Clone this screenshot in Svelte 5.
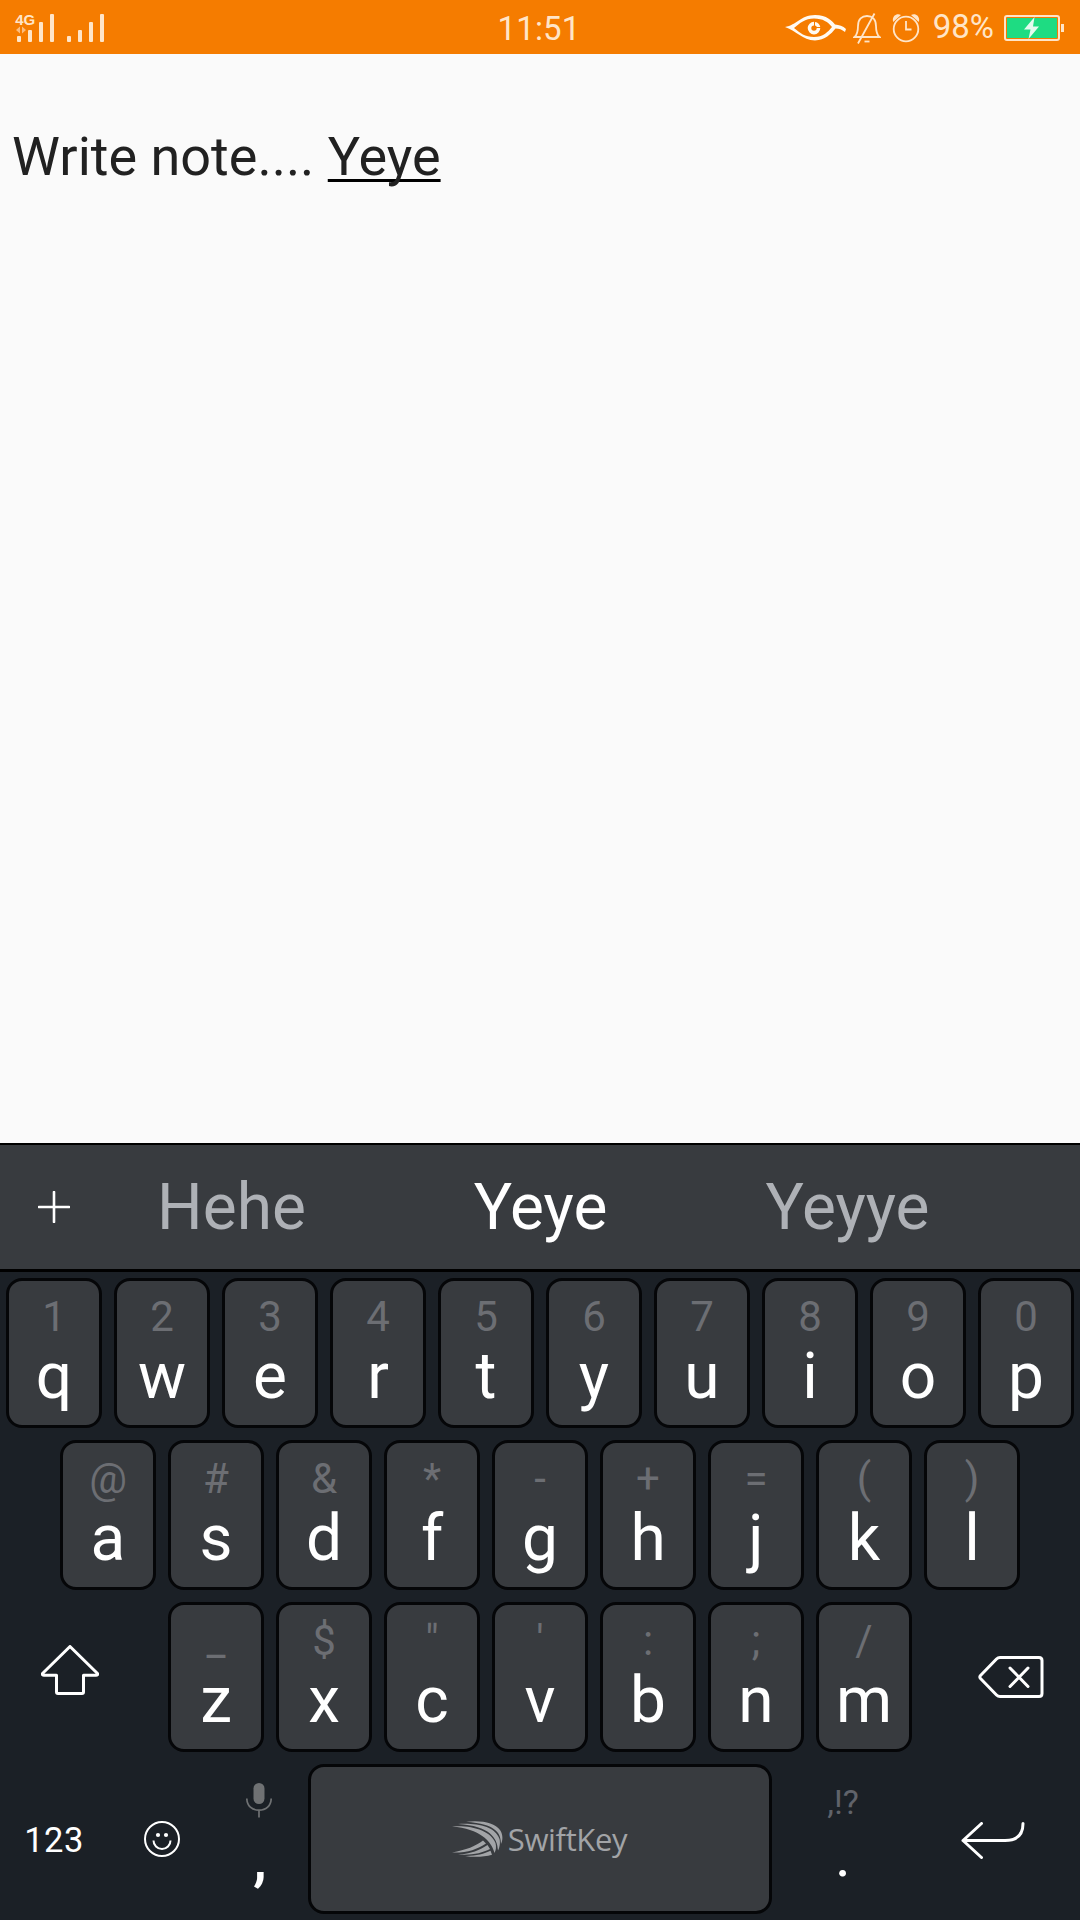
<script>
  const pair = (letters, hints) => letters.map((letter, i) => ({ letter, hint: hints[i] }));

  const top = pair([...'qwertyuiop'], [...'1234567890']);
  const middle = pair([...'asdfghjkl'], [...'@#&*-+=()']);
  const bottom = pair([...'zxcvbnm'], ['_', '$', '"', "'", ':', ';', '/']);
  const suggestions = ['Hehe', 'Yeye', 'Yeyye'];
</script>

{#snippet key(k)}
  <button class="key">
    <span class="hint">{k.hint}</span>
    <span class="letter">{k.letter}</span>
  </button>
{/snippet}

<div class="screen">
  <header class="status">
    <svg class="signal" width="92" height="54" viewBox="0 0 92 54">
      <text x="3.2" y="24" class="net">4G</text>
      <path class="dim" d="M4 29l4-3.5v7zM14 29l-4-3.5v7z" />
      <rect x="5" y="35" width="4" height="6" rx="1" />
      <rect x="16" y="29" width="4" height="12" rx="1" />
      <rect x="27" y="21" width="4" height="20" rx="1" />
      <rect x="38" y="13" width="4" height="28" rx="1" />
      <rect x="55" y="35" width="4" height="6" rx="1" />
      <rect x="66" y="29" width="4" height="12" rx="1" />
      <rect x="77" y="21" width="4" height="20" rx="1" />
      <rect x="88" y="13" width="4" height="28" rx="1" />
    </svg>
    <time class="clock">11:51</time>
    <div class="tray">
      <svg class="eye" width="62" height="54" viewBox="0 0 62 54">
        <path d="M0 26C12 24 15 14.500 30 14C42 14 47 20 50 23.500C54 24 58 25 61 28L60 31C57 28.500 54 27.500 50.500 27.500C46 33 40 39 30 39.500C17 39 12 30 0 26ZM9 27C15 32 20 36 29 36C38 36 43 31 47 26C43 21 38 17.500 29 17.500C20 17.500 15 22 9 27Z" />
        <path d="M29 20.800a6.300 6.300 0 1 0 6.300 6.300h-3.600a2.700 2.700 0 1 1-2.700-2.700z" />
        <path d="M30 20.900a6.300 6.300 0 0 1 5.300 5.200h-3.500a2.700 2.700 0 0 0-1.800-1.700z" />
      </svg>
      <svg class="bell" width="28" height="54" viewBox="0 0 28 54">
        <path d="M1.500 36C5 33 5 29 5 25C5 18 9 15 14 15s9 3 9 10c0 4 0 8 3.500 11zM5 42.500L21.500 12.500" />
        <path d="M11.500 40.500h5" />
      </svg>
      <svg class="alarm" width="28" height="54" viewBox="0 0 28 54">
        <circle cx="14" cy="28" r="12.300" />
        <path d="M14 20v8.500h5.500" />
        <path class="ear" d="M1.200 21C-.5 16 4 11.500 9 14zM26.800 21C28.500 16 24 11.500 19 14z" />
      </svg>
      <span class="percent">98%</span>
      <svg class="battery" width="61" height="54" viewBox="0 0 61 54">
        <rect class="shell" x="1" y="15" width="54" height="24" rx="2" />
        <rect class="charge" x="3" y="17" width="50" height="20" />
        <rect class="nub" x="57" y="23" width="3" height="8" />
        <path class="bolt" d="M30.500 16L20 28.500h6.500L24.500 38L35 25.500h-6z" />
      </svg>
    </div>
  </header>

  <main class="note">Write note.... <span class="composing">Yeye</span></main>

  <section class="suggestions">
    <svg class="plus" width="32" height="32" viewBox="0 0 32 32"><path d="M16 1v30M1 16h30" /></svg>
    {#each suggestions as word, i}
      <span class="word" class:active={i === 1}>{word}</span>
    {/each}
  </section>

  <section class="keyboard">
    <div class="row">
      {#each top as k}{@render key(k)}{/each}
    </div>
    <div class="row">
      {#each middle as k}{@render key(k)}{/each}
    </div>
    <div class="row">
      <div class="side shift">
        <svg width="58" height="50" viewBox="0 0 58 50">
          <path d="M29 1.500L56.500 28.500Q57 30.300 55 30.300H42.500V47Q42.500 48.500 41 48.500H17Q15.500 48.500 15.500 47V30.300H3Q1 30.300 1.500 28.500Z" />
        </svg>
      </div>
      {#each bottom as k}{@render key(k)}{/each}
      <div class="side erase">
        <svg width="66" height="42" viewBox="0 0 66 42">
          <path d="M22 1.500H61Q64 1.500 64 4.500V37.500Q64 40.500 61 40.500H22Q20 40.500 18.500 39L2.500 22.500Q1.200 21 2.500 19.500L18.500 3Q20 1.500 22 1.500ZM32 12l18 18.500M50 12L32 30.500" />
        </svg>
      </div>
    </div>
    <div class="last">
      <span class="numbers">123</span>
      <svg class="smile" width="36" height="36" viewBox="0 0 36 36">
        <circle cx="18" cy="18" r="17" />
        <path d="M9.500 19.500a8.500 8.500 0 0 0 17 0" />
        <circle class="dot" cx="14" cy="14" r="2.100" />
        <circle class="dot" cx="22" cy="14" r="2.100" />
      </svg>
      <div class="mark">
        <svg class="mic" width="26" height="36" viewBox="0 0 26 36">
          <rect x="7.500" y="0" width="11" height="21" rx="5.500" />
          <path d="M.8 15.500C1 23 6 27.200 13 27.200S25 23 25.200 15.500M13 27v7.500" />
        </svg>
        <span class="comma">,</span>
      </div>
      <div class="space">
        <svg class="logo" width="51" height="36" viewBox="0 0 51 36">
          <path d="M14 .8C30 -1 43 2 48 9C51 13 51 19 49 23C49 13 45 3 14 .8Z" />
          <path d="M6 3C25 2 43 5 47.500 18C48.500 22 47.500 27 46 29.500C45.500 17 38 5 6 3Z" />
          <path d="M0 5.500C20 4 39 10 43.500 22C44.500 26 44 29 42.500 32C39.500 20 28 8 0 5.500Z" />
          <path d="M0 31.500C14 29 24 25 31 19.500L34 22.500C25 28.500 15 32 0 31.500Z" />
          <path d="M6 33.500C19 33 28 29 35.500 24L38 28C30 32 20 34.500 6 33.500Z" />
          <path d="M13 35C24 35.200 32 33 38.500 29.800L40 33.800C32 36 22 36.500 13 35Z" />
        </svg>
        <span class="brand">SwiftKey</span>
      </div>
      <div class="mark">
        <span class="punct">,!?</span>
        <span class="period">.</span>
      </div>
      <svg class="enter" width="64" height="37" viewBox="0 0 64 37">
        <path d="M20.500 1.500L2 18.500L20.500 35.500M2 18.500H44Q62 18.500 62 1.500" />
      </svg>
    </div>
  </section>
</div>

<style>
  .screen {
    width: 1080px;
    height: 1920px;
    display: flex;
    flex-direction: column;
    overflow: hidden;
    background: #fafafa;
    font-family: Roboto, sans-serif;
  }
  svg {
    display: block;
    flex: none;
  }
  .status {
    height: 54px;
    flex: none;
    display: grid;
    grid-template-columns: 1fr auto 1fr;
    align-items: center;
    padding: 0 15px 0 12px;
    background: #f57c00;
    color: #ffe5c8;
  }
  .signal { fill: #ffe5c8; }
  .net { font: bold 15px 'Liberation Sans', sans-serif; }
  .dim { fill: #fbbd80; }
  .clock {
    font-size: 33px;
    line-height: 54px;
    padding: 2px 0 0 1px;
    letter-spacing: 0.200px;
  }
  .tray {
    display: flex;
    justify-content: flex-end;
    align-items: center;
  }
  .eye { fill: #fffaf2; margin-right: 6px; }
  .bell, .alarm {
    fill: none;
    stroke: #ffe5c8;
    stroke-width: 1.8;
  }
  .bell { margin-right: 11px; }
  .alarm { margin-right: 13px; }
  .alarm .ear { fill: #ffe5c8; stroke: none; }
  .percent {
    font-size: 33px;
    line-height: 52px;
    margin-right: 10px;
    padding-bottom: 2px;
  }
  .shell { fill: none; stroke: #ffe5c8; stroke-width: 2; }
  .charge { fill: #1edc82; }
  .nub { fill: #ffe5c8; }
  .bolt { fill: #e4fbef; }

  .note {
    flex: 1;
    padding: 71px 12px 0;
    font-size: 54px;
    line-height: 64px;
    color: #212121;
    white-space: pre-wrap;
  }
  .composing {
    text-decoration: underline #000 3px;
    text-underline-offset: 4px;
    text-decoration-skip-ink: none;
  }

  .suggestions {
    box-sizing: border-box;
    height: 129px;
    flex: none;
    display: grid;
    grid-template-columns: 80px repeat(3, 307px);
    align-items: center;
    border-top: 2px solid #000;
    border-bottom: 3px solid #000;
    background: #383b3f;
  }
  .plus {
    margin-left: 38px;
    fill: none;
    stroke: #fff;
    stroke-width: 2.6;
    stroke-linecap: round;
  }
  .word {
    padding-top: 2px;
    font-size: 64px;
    line-height: 122px;
    text-align: center;
    color: #aeb1b6;
  }
  .word:first-of-type { padding-right: 4px; }
  .word.active { color: #fff; }

  .keyboard {
    height: 648px;
    flex: none;
    background: #1b2026;
  }
  .row {
    height: 162px;
    display: flex;
    justify-content: center;
    align-items: center;
  }
  .key {
    box-sizing: border-box;
    width: 96px;
    height: 150px;
    margin: 0 6px;
    padding: 11px 0 0;
    flex: none;
    display: flex;
    flex-direction: column;
    align-items: center;
    justify-content: flex-start;
    border: 3px solid #050608;
    border-radius: 16px;
    background: #383b3f;
    font-family: inherit;
  }
  .hint {
    font-size: 42px;
    line-height: 50px;
    color: #6c6e73;
  }
  .letter {
    margin-top: 2px;
    font-size: 64px;
    line-height: 66px;
    color: #fff;
  }
  .side {
    box-sizing: border-box;
    width: 162px;
    flex: none;
  }
  .side svg {
    fill: none;
    stroke: #fff;
    stroke-width: 3;
    stroke-linejoin: round;
    stroke-linecap: round;
  }
  .shift { padding: 0 0 14px 41px; }
  .erase { padding: 0 0 0 60px; }

  .last {
    height: 162px;
    display: grid;
    grid-template-columns: 108px 108px 86px 476px 130px 172px;
    align-items: center;
    justify-items: center;
  }
  .numbers {
    padding-top: 2px;
    font-size: 34.500px;
    letter-spacing: 0.500px;
    color: #fff;
  }
  .smile {
    fill: none;
    stroke: #fff;
    stroke-width: 2;
  }
  .smile .dot { fill: #fff; stroke: none; }
  .mark {
    height: 162px;
    display: flex;
    flex-direction: column;
    align-items: center;
  }
  .mic {
    margin-top: 25px;
    fill: #6f7173;
  }
  .mic path { fill: none; stroke: #6f7173; stroke-width: 1.700; }
  .comma {
    font-size: 62px;
    font-weight: 500;
    line-height: 66px;
    margin-top: 6px;
    padding-left: 2px;
    color: #fff;
  }
  .punct {
    margin-top: 24px;
    font-size: 34px;
    line-height: 40px;
    color: #60636a;
  }
  .period {
    font-size: 60px;
    line-height: 60px;
    margin-top: 4px;
    color: #fff;
  }
  .space {
    box-sizing: border-box;
    width: 464px;
    height: 150px;
    display: flex;
    align-items: center;
    justify-content: center;
    gap: 5px;
    border: 3px solid #050608;
    border-radius: 16px;
    background: #383b3f;
  }
  .logo { fill: #a2a4a7; }
  .brand {
    font-family: 'Open Sans', sans-serif;
    font-size: 31px;
    letter-spacing: -0.350px;
    line-height: 38px;
    padding: 0 1px 1px 0;
    color: #a2a4a7;
  }
  .enter {
    margin: 2px 2px 0 0;
    fill: none;
    stroke: #fff;
    stroke-width: 3;
    stroke-linecap: round;
    stroke-linejoin: round;
  }
</style>
